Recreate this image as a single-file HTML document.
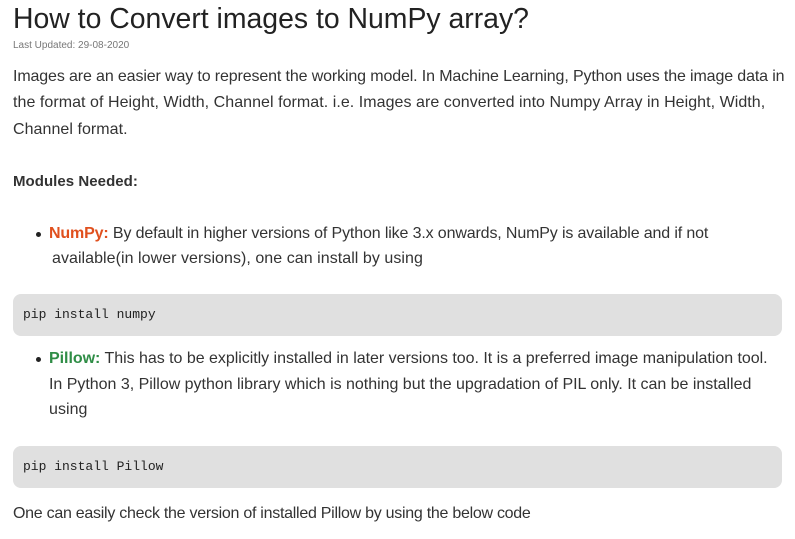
<!DOCTYPE html>
<html><head><meta charset="utf-8"><style>
body{margin:0;width:795px;height:539px;background:#fff;font-family:"Liberation Sans",sans-serif;color:#333;position:relative;overflow:hidden}
.a{position:absolute;left:13px;white-space:nowrap;font-size:16px;letter-spacing:0.05px}
h1{position:absolute;left:13px;top:3px;margin:0;font-weight:normal;font-size:28.4px;color:#222;white-space:nowrap}
.d{position:absolute;left:13px;top:40px;font-size:10px;color:#777}
.code{position:absolute;left:13px;width:769px;height:42px;background:#e0e0e0;border-radius:8px;font-family:"Liberation Mono",monospace;font-size:13px;color:#222;line-height:42px;text-indent:10px}
.dot{position:absolute;left:36px;width:5px;height:5px;border-radius:50%;background:#222}
</style></head><body>
<h1>How to Convert images to NumPy array?</h1>
<div class="d">Last Updated: 29-08-2020</div>
<div class="a" style="top:68px;letter-spacing:-0.13px">Images are an easier way to represent the working model. In Machine Learning, Python uses the image data in</div>
<div class="a" style="top:94px">the format of Height, Width, Channel format. i.e. Images are converted into Numpy Array in Height, Width,</div>
<div class="a" style="top:121px">Channel format.</div>
<div class="a" style="top:173px;font-weight:bold;font-size:15px">Modules Needed:</div>
<div class="dot" style="top:232px"></div>
<div class="a" style="top:225px;left:49px;letter-spacing:-0.14px"><b style="color:#e0501e">NumPy:</b> By default in higher versions of Python like 3.x onwards, NumPy is available and if not</div>
<div class="a" style="top:250px;left:52px">available(in lower versions), one can install by using</div>
<div class="code" style="top:294px">pip install numpy</div>
<div class="dot" style="top:357px"></div>
<div class="a" style="top:350px;left:49px;letter-spacing:-0.03px"><b style="color:#2f8d46">Pillow:</b> This has to be explicitly installed in later versions too. It is a preferred image manipulation tool.</div>
<div class="a" style="top:376px;left:49px;letter-spacing:-0.02px">In Python 3, Pillow python library which is nothing but the upgradation of PIL only. It can be installed</div>
<div class="a" style="top:401px;left:49px">using</div>
<div class="code" style="top:446px">pip install Pillow</div>
<div class="a" style="top:505px;letter-spacing:-0.27px">One can easily check the version of installed Pillow by using the below code</div>
</body></html>
